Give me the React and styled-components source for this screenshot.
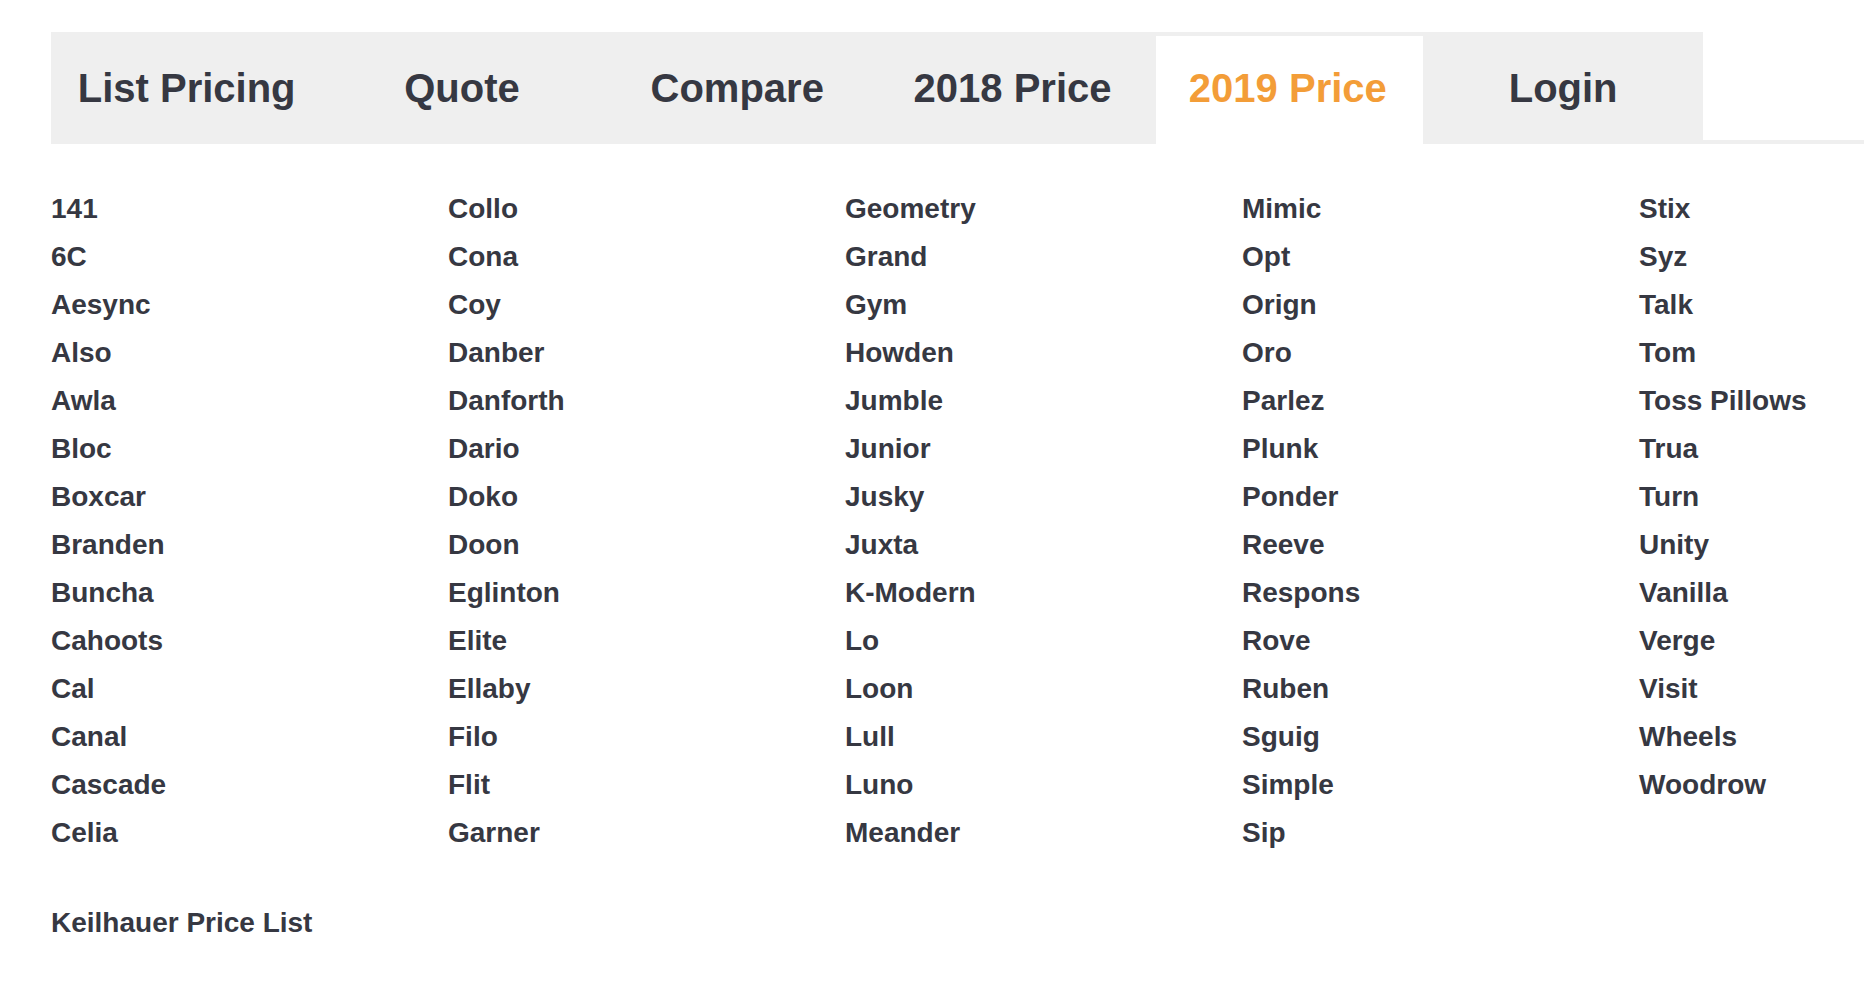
import React from "react";
import styled, { createGlobalStyle } from "styled-components";

const tabs = ["List Pricing", "Quote", "Compare", "2018 Price", "2019 Price", "Login"];
const activeTab = "2019 Price";

const columns = [
  ["141", "6C", "Aesync", "Also", "Awla", "Bloc", "Boxcar", "Branden", "Buncha", "Cahoots", "Cal", "Canal", "Cascade", "Celia"],
  ["Collo", "Cona", "Coy", "Danber", "Danforth", "Dario", "Doko", "Doon", "Eglinton", "Elite", "Ellaby", "Filo", "Flit", "Garner"],
  ["Geometry", "Grand", "Gym", "Howden", "Jumble", "Junior", "Jusky", "Juxta", "K-Modern", "Lo", "Loon", "Lull", "Luno", "Meander"],
  ["Mimic", "Opt", "Orign", "Oro", "Parlez", "Plunk", "Ponder", "Reeve", "Respons", "Rove", "Ruben", "Sguig", "Simple", "Sip"],
  ["Stix", "Syz", "Talk", "Tom", "Toss Pillows", "Trua", "Turn", "Unity", "Vanilla", "Verge", "Visit", "Wheels", "Woodrow"],
];

const GlobalStyle = createGlobalStyle`
  html, body {
    margin: 0;
    padding: 0;
    background: #ffffff;
    overflow-x: hidden;
  }
  body {
    font-family: "Liberation Sans", Arial, Helvetica, sans-serif;
    color: #363842;
  }
`;

const Page = styled.div`
  padding: 32px 0 40px 51px;
`;

const NavBar = styled.nav`
  display: flex;
  align-items: flex-start;
  height: 108px;
  border-bottom: 4px solid #efefef;
`;

const Tab = styled.a`
  box-sizing: border-box;
  flex: 0 0 275.3px;
  display: flex;
  align-items: center;
  justify-content: center;
  height: ${(p) => (p.$active ? "112px" : "108px")};
  margin-bottom: ${(p) => (p.$active ? "-4px" : "0")};
  background: ${(p) => (p.$active ? "#ffffff" : "#efefef")};
  border: 4px solid #efefef;
  border-bottom: none;
  padding: 0 4px ${(p) => (p.$active ? "4px" : "0")} 0;
  font-size: 40px;
  font-weight: 700;
  color: ${(p) => (p.$active ? "#f39d38" : "#363842")};
  text-decoration: none;
  cursor: pointer;
  position: relative;
`;

const Collections = styled.div`
  display: grid;
  grid-template-columns: repeat(4, 397px) 1fr;
  margin-top: 41px;
`;

const Column = styled.ul`
  list-style: none;
  margin: 0;
  padding: 0;
  display: flex;
  flex-direction: column;
`;

const Item = styled.li`
  font-size: 28px;
  font-weight: 700;
  line-height: 48px;
  white-space: nowrap;
`;

const Footer = styled.p`
  margin: 42px 0 0;
  font-size: 28px;
  font-weight: 700;
  line-height: 48px;
`;

export default function App() {
  return (
    <>
      <GlobalStyle />
      <Page>
        <NavBar>
          {tabs.map((t) => (
            <Tab key={t} $active={t === activeTab}>
              {t}
            </Tab>
          ))}
        </NavBar>
        <Collections>
          {columns.map((col, i) => (
            <Column key={i}>
              {col.map((name) => (
                <Item key={name}>{name}</Item>
              ))}
            </Column>
          ))}
        </Collections>
        <Footer>Keilhauer Price List</Footer>
      </Page>
    </>
  );
}
